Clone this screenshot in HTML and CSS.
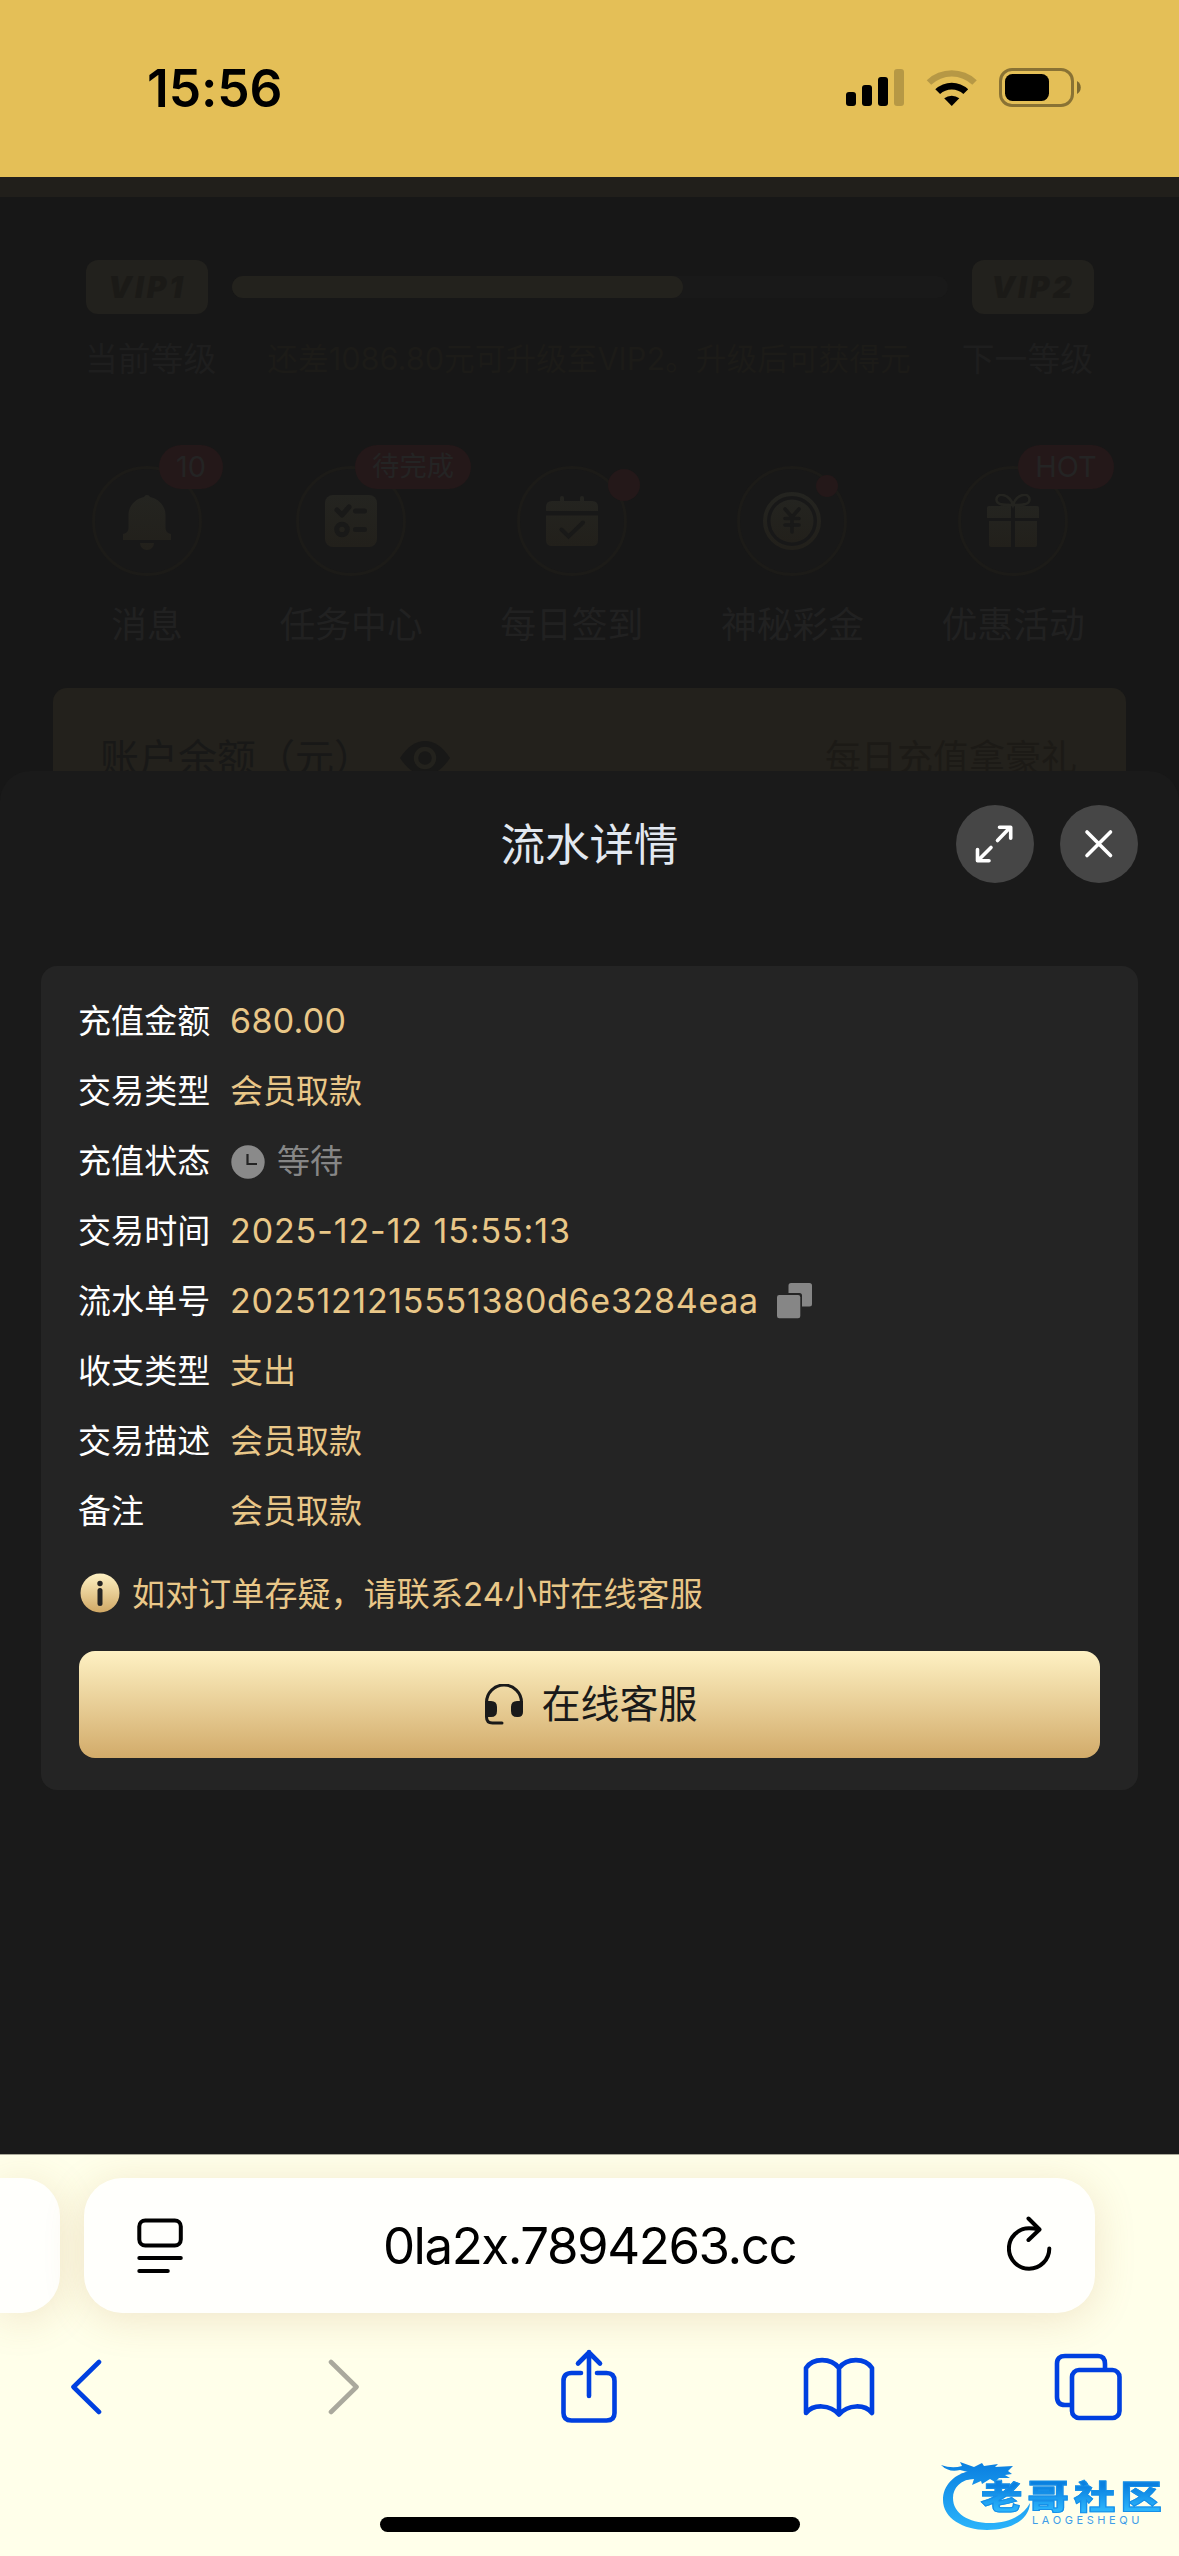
FILE: index.html
```html
<!DOCTYPE html>
<html lang="zh-CN">
<head>
<meta charset="utf-8">
<meta name="viewport" content="width=device-width">
<title>流水详情</title>
<link rel="stylesheet" href="styles.css">
</head>
<body>
<svg class="defs" width="0" height="0" aria-hidden="true">
  <defs>
    <linearGradient id="dim" x1="0" y1="0" x2="0" y2="1"><stop offset="0" stop-color="#242420"/><stop offset="1" stop-color="#22201b"/></linearGradient>
    <linearGradient id="gold" x1="0" y1="0" x2="0" y2="1"><stop offset="0" stop-color="#fef1c3"/><stop offset="1" stop-color="#d0a865"/></linearGradient>
    <linearGradient id="azure" gradientUnits="userSpaceOnUse" x1="0" y1="0" x2="0" y2="68"><stop offset="0" stop-color="#0a7fe0"/><stop offset="1" stop-color="#2bb4fb"/></linearGradient>
  </defs>
</svg>

<header class="status">
  <span class="clock">15:56</span>
  <div class="indicators">
    <svg width="58" height="38" viewBox="0 0 58 38"><rect x="0" y="23" width="10" height="14" rx="3"/><rect x="16" y="16" width="10" height="21" rx="3"/><rect x="32" y="8" width="10" height="29" rx="3"/><rect x="48" y="0" width="10" height="37" rx="3" opacity=".2"/></svg>
    <svg class="wifi" width="52" height="38" viewBox="0 0 52 38"><path opacity=".2" d="M.7 11.200A36.500 36.500 0 0 1 50.800 11.200L46.300 15.700A30 30 0 0 0 5.200 15.700Z"/><path d="M9.300 20.300A24 24 0 0 1 42.200 20.300L37.400 25.100A17 17 0 0 0 14.100 25.100Z"/><path d="M18.200 29.300A12 12 0 0 1 33.300 29.300L25.750 37Z"/></svg>
    <svg width="84" height="39" viewBox="0 0 84 39"><rect x="1.500" y="1.500" width="72" height="36" rx="11.500" fill="none" stroke="#000" stroke-width="3" opacity=".4"/><rect x="6" y="6" width="44" height="27" rx="7.500"/><path opacity=".45" d="M78 13a7.500 7.500 0 0 1 0 13Z"/></svg>
  </div>
</header>

<main class="viewport">
  <div class="strip"></div>
  <section class="account">
    <div class="vip-row">
      <span class="vip">VIP1</span>
      <div class="track"><div class="fill"></div></div>
      <span class="vip">VIP2</span>
    </div>
    <div class="vip-labels"><span>当前等级</span><span class="need">还差1086.80元可升级至VIP2。升级后可获得元</span><span>下一等级</span></div>
    <nav class="shortcuts">
      <div class="shortcut">
        <div class="disc"><svg width="50" height="58" viewBox="0 0 50 58" fill="url(#dim)"><path d="M22 5a3.200 3.200 0 0 1 6 0C37 7 43.500 14 43.500 23v13q0 5 5.500 6v6H1v-6q5.500-1 5.500-6V23C6.500 14 13 7 22 5ZM18 51h14a7 7 0 0 1-14 0Z"/></svg><b class="badge">10</b></div>
        <span>消息</span>
      </div>
      <div class="shortcut">
        <div class="disc"><svg width="52" height="52" viewBox="0 0 52 52"><rect width="52" height="52" rx="8" fill="url(#dim)"/><g fill="none" stroke="#191918" stroke-width="5" stroke-linecap="round" stroke-linejoin="round"><path d="M12 15l5 5 7-8M30.500 16h9M30.500 34.500h9"/><circle cx="17" cy="34.500" r="5.300"/></g></svg><b class="badge wide">待完成</b></div>
        <span>任务中心</span>
      </div>
      <div class="shortcut">
        <div class="disc"><svg width="54" height="52" viewBox="0 0 54 52"><path fill="url(#dim)" d="M1 16v-4q0-6 6-6h8V3q0-2 2-2t2 2v3h16V3q0-2 2-2t2 2v3h8q6 0 6 6v4ZM1 20.500h52V45q0 6-6 6H7q-6 0-6-6Z"/><path d="M16.500 34.500l7 7L38 27.500" fill="none" stroke="#191918" stroke-width="4" stroke-linecap="round"/></svg><b class="dot large"></b></div>
        <span>每日签到</span>
      </div>
      <div class="shortcut">
        <div class="disc"><svg width="58" height="58" viewBox="0 0 58 58"><circle cx="29" cy="29" r="27" fill="none" stroke="url(#dim)" stroke-width="4"/><circle cx="29" cy="29" r="21.500" fill="url(#dim)"/><path d="M22 17l7 8 7-8M29 25v15M22 26.500h14M22 33h14" fill="none" stroke="#191918" stroke-width="3.600" stroke-linecap="round"/></svg><b class="dot"></b></div>
        <span>神秘彩金</span>
      </div>
      <div class="shortcut">
        <div class="disc"><svg width="52" height="54" viewBox="0 0 52 54"><path fill="url(#dim)" d="M0 14q0-2 2-2h22v12H0ZM28 12h22q2 0 2 2v10H28ZM2 27h22v26H4q-2 0-2-2ZM28 27h22v24q0 2-2 2H28Z"/><path d="M26 11C22-1 9-2 9.500 6c.3 5 8 5 16.500 5 8.500 0 16.200 0 16.500-5C43-2 30-1 26 11Z" fill="none" stroke="#242420" stroke-width="2.600"/></svg><b class="badge wide hot">HOT</b></div>
        <span>优惠活动</span>
      </div>
    </nav>
    <div class="balance">
      <div class="balance-title">账户余额（元）<svg width="50" height="34" viewBox="0 0 50 34"><path fill="#181817" d="M0 17C8 5 16 0 25 0s17 5 25 17C42 29 34 34 25 34S8 29 0 17Z"/><circle cx="25" cy="17" r="9" fill="none" stroke="#23221d" stroke-width="4.500"/></svg></div>
      <span class="gift-text">每日充值拿豪礼</span>
    </div>
  </section>

  <section class="sheet">
    <div class="sheet-head">
      <h1>流水详情</h1>
      <div class="sheet-actions">
        <button class="round" aria-label="展开"><svg width="78" height="78" viewBox="0 0 78 78"><path d="M41.500 35.500L54 22.500M43.500 22.300h11.200v11M35 42.500L22 55.500M21.500 44.500v11.200h11.500"/></svg></button>
        <button class="round" aria-label="关闭"><svg width="78" height="78" viewBox="0 0 78 78"><path d="M27 27l23.500 23.500M50.500 27L27 50.500"/></svg></button>
      </div>
    </div>
    <div class="card">
      <dl class="rows">
        <div><dt>充值金额</dt><dd class="amount">680.00</dd></div>
        <div><dt>交易类型</dt><dd>会员取款</dd></div>
        <div><dt>充值状态</dt><dd class="pending"><svg width="34" height="34" viewBox="0 0 34 34"><circle cx="17" cy="17" r="16.700" fill="#8a8a8a"/><path d="M16.500 9v10H26" fill="none" stroke="#242424" stroke-width="2.200"/></svg>等待</dd></div>
        <div><dt>交易时间</dt><dd class="time">2025-12-12 15:55:13</dd></div>
        <div><dt>流水单号</dt><dd class="serial">2025121215551380d6e3284eaa<svg width="35" height="36" viewBox="0 0 35 36" fill="#868686"><path d="M14 0h18.500Q35 0 35 2.500V21q0 2.500-2.500 2.500H25V12.500q0-2.500-2.500-2.500h-11V2.500Q11.500 0 14 0Z"/><rect x="0" y="12" width="23.300" height="23.300" rx="2.200"/></svg></dd></div>
        <div><dt>收支类型</dt><dd>支出</dd></div>
        <div><dt>交易描述</dt><dd>会员取款</dd></div>
        <div><dt>备注</dt><dd>会员取款</dd></div>
      </dl>
      <p class="hint"><svg width="40" height="40" viewBox="0 0 40 40"><circle cx="20" cy="20" r="19.500" fill="url(#gold)"/><circle cx="20" cy="10.500" r="2.700" fill="#242424"/><path d="M20 17.500v13" stroke="#242424" stroke-width="5" stroke-linecap="round"/></svg><span>如对订单存疑，请联系24小时在线客服</span></p>
      <button class="service"><svg width="38" height="41" viewBox="0 0 38 41"><path d="M1.500 32V18.500a17.500 17.500 0 0 1 35 0V22M1.500 30v3q0 6 6 6H17" fill="none" stroke="#1a1a1a" stroke-width="3" stroke-linecap="round"/><path fill="#1a1a1a" d="M0 17h6q6 0 6 6v4q0 6-6 6H0ZM38 17h-6q-6 0-6 6v4q0 6 6 6h1q5 0 5-5Z"/></svg><span>在线客服</span></button>
    </div>
  </section>
</main>

<footer class="browser">
  <div class="tabs">
    <div class="tab-prev"></div>
    <div class="address">
      <svg width="46" height="56" viewBox="0 0 46 56" fill="none" stroke="#000" stroke-width="4" stroke-linecap="round"><rect x="2.300" y="2.500" width="41.500" height="25" rx="6"/><path d="M2.300 40h41.500M2.300 53h28.500"/></svg>
      <span class="url">0la2x.7894263.cc</span>
      <svg class="reload" width="45" height="55" viewBox="0 0 45 55" fill="none" stroke="#000" stroke-width="4" stroke-linecap="round" stroke-linejoin="round"><path d="M42.300 32.500A20.200 20.200 0 1 1 22 12.300q5 0 10 1.200"/><path d="M21.500 2.500L32.500 13.500 21.500 24"/></svg>
    </div>
  </div>
  <nav class="toolbar">
    <svg width="32" height="56" viewBox="0 0 32 56"><path d="M29 3L3.500 28 29 53"/></svg>
    <svg class="off" width="32" height="56" viewBox="0 0 32 56"><path d="M3 3l25.500 25L3 53"/></svg>
    <svg class="share" width="58" height="74" viewBox="0 0 58 74"><path d="M21 24h-9.500q-8 0-8 8v32q0 7.500 8 7.500h35q8 0 8-7.500V32q0-8-8-8H37M29 3v44M18 14.500L29 3.500l11 11"/></svg>
    <svg class="book" width="72" height="60" viewBox="0 0 72 60"><path d="M36 11C28 .5 10 .5 3 11v45c7-9 24-9 33 1.500 9-10.500 26-10.500 33-1.500V11C62 .5 44 .5 36 11ZM36 11v46"/></svg>
    <svg class="pages" width="68" height="68" viewBox="0 0 68 68"><rect x="18" y="17" width="47.500" height="48" rx="7"/><path d="M16 52h-5q-8 0-8-8V10.500Q3 3 11 3h33q7 0 7 8v4"/></svg>
  </nav>
  <div class="home"></div>
  <div class="watermark">
    <svg width="100" height="72" viewBox="0 0 100 72" fill="url(#azure)"><path d="M34 8C12 11 2 24 2 38c0 18 20 30 44 30 22 0 42-9 43-27-7 13-22 20-40 20-22 0-37-10-37-25 0-10 7-18 22-20Z"/><path d="M0 3q11 4 21 1L19 0l14 5 8-4 2 3 14-2-3 3 18-1-5 5 4 3-7 1 5 3-11 0-4 4-5-3-8 5-1-3-9 4 2-6-9 1 3-4-8-2 8-2-8-2Q8 11 0 3Z"/></svg>
    <span class="mark-name">老哥社区</span>
    <span class="mark-latin">LAOGESHEQU</span>
  </div>
</footer>
</body>
</html>
```
FILE: styles.css
```css
* { box-sizing: border-box; margin: 0; padding: 0; }
body { width: 1179px; height: 2556px; overflow: hidden; background: #171717; font-family: Inter, "Noto Sans CJK SC", sans-serif; display: flex; flex-direction: column; }
svg { display: block; flex: none; }
.defs { position: absolute; }
button { border: 0; font: inherit; }
.status { height: 177px; background: #e4bf57; display: flex; justify-content: space-between; align-items: flex-start; padding: 68px 96px 0 147px; }
.clock { font-size: 51.500px; font-weight: 600; line-height: 40px; letter-spacing: -0.100px; }
.indicators { display: flex; align-items: center; gap: 22px; }
.indicators svg:last-child { margin-left: -1px; }
.strip { height: 20px; background: #211f1b; }
.account { height: 574px; overflow: hidden; padding: 63px 53px 0; }
.vip-row { display: flex; align-items: center; gap: 24px; padding: 0 32px 0 33px; }
.vip { width: 122px; height: 54px; border-radius: 12px; background: #22211d; color: #1b1a17; font-size: 30px; font-weight: 900; font-style: italic; line-height: 54px; text-align: center; letter-spacing: 3px; }
.track { flex: 1; height: 22px; border-radius: 11px; background: #191919; }
.fill { width: 63%; height: 22px; border-radius: 11px; background: #23221d; }
.vip-labels { display: flex; justify-content: space-between; margin-top: 25px; padding: 0 33px 0 32px; font-size: 32.800px; line-height: 40px; color: #1e1e1e; white-space: nowrap; }
.need { font-size: 30.700px; color: #1c1b18; }
.shortcuts { display: flex; gap: 77.500px; margin-top: 87px; padding-left: 39px; }
.shortcut { display: flex; flex-direction: column; align-items: center; gap: 27px; min-width: 110px; font-size: 35.800px; line-height: 44px; color: #212121; white-space: nowrap; }
.disc { position: relative; width: 110px; height: 110px; border-radius: 50%; border: 3px solid #1c1b18; background: #181818; display: flex; align-items: center; justify-content: center; }
.badge { position: absolute; left: 64px; top: -24px; height: 44px; padding: 0 17px; border-radius: 22px; background: #241819; color: #242424; font-size: 29px; font-weight: 400; line-height: 43px; }
.badge.wide { left: 56px; font-size: 27.300px; }
.badge.hot { left: 57px; font-size: 29px; }
.dot { position: absolute; left: 76px; top: 6px; width: 22px; height: 22px; border-radius: 50%; background: #241819; }
.dot.large { left: 88px; top: 0; width: 32px; height: 32px; }
.balance { display: flex; justify-content: space-between; height: 120px; margin-top: 41px; padding: 45px 49px 0 47px; border-radius: 14px; background: #23211c; line-height: 50px; }
.balance-title { display: flex; align-items: center; gap: 27px; height: 50px; font-size: 39px; color: #181817; }
.gift-text { font-size: 36px; color: #1c1a16; }
.sheet { height: 1383px; background: #1a1a1a; border-radius: 30px 30px 0 0; padding: 33px 41px 0; }
.sheet-head { display: grid; grid-template-columns: 1fr auto 1fr; align-items: center; height: 79px; }
h1 { grid-column: 2; padding-top: 2px; font-size: 44.500px; font-weight: 400; line-height: 60px; color: #e2e8f0; }
.sheet-actions { display: flex; justify-content: flex-end; gap: 26px; }
.round { width: 78px; height: 78px; border-radius: 50%; background: #464646; }
.round svg { fill: none; stroke: #fff; stroke-width: 3.600; stroke-linecap: round; stroke-linejoin: round; }
.card { height: 824px; margin-top: 83px; padding: 20px 38px 0 37px; border-radius: 16px; background: #242424; }
.rows > div { display: flex; height: 70px; align-items: center; font-size: 33px; line-height: 44px; color: #fff; }
dt { width: 152px; letter-spacing: 0.100px; }
dd { display: flex; align-items: center; color: #e9c788; white-space: nowrap; }
.amount, .time, .serial { font-size: 34px; }
.amount { letter-spacing: 0.300px; }
.time { letter-spacing: 0.900px; }
.serial { letter-spacing: 0.700px; }
.pending { gap: 12px; color: #868686; }
.pending svg { margin: 2px 0 0 1px; }
.serial svg { margin-left: 18px; }
.hint { display: flex; align-items: center; gap: 12px; height: 44px; margin: 25px 0 0 2px; font-size: 33px; letter-spacing: 0.100px; color: #e9c788; white-space: nowrap; }
.hint span { margin-top: -2px; }
.service { display: flex; align-items: center; justify-content: center; gap: 18px; width: calc(100% - 1px); height: 107px; margin: 36px 0 0 1px; padding-left: 4px; border-radius: 16px; background: linear-gradient(#fef1c3, #d2ab6a); color: #1a1a1a; font-size: 39px; }
.service span { margin-top: -7px; }
.browser { position: relative; height: 402px; overflow: hidden; border-top: 1px solid #aaa999; background: #ffffea; }
.tabs { display: flex; gap: 24px; padding-top: 23px; }
.tab-prev { width: 60px; height: 135px; border-radius: 0 38px 38px 0; background: #fffffc; box-shadow: 0 6px 40px rgba(170, 110, 50, .18); }
.address { display: flex; align-items: center; justify-content: space-between; width: 1011px; height: 135px; padding: 0 43px 0 53px; border-radius: 38px; background: #fffffc; box-shadow: 0 6px 40px rgba(170, 110, 50, .18); }
.url { margin-right: 11px; font-size: 51px; line-height: 60px; letter-spacing: -1.450px; color: #000; }
.reload { margin-bottom: 5px; }
.toolbar { display: flex; align-items: center; height: 76px; margin-top: 36px; padding-left: 70px; }
.toolbar svg { fill: none; stroke: #0040e0; stroke-width: 4.600; stroke-linecap: round; stroke-linejoin: round; }
.toolbar .off { margin-left: 226px; stroke: #aaa99d; }
.toolbar .share { margin: 0 0 3px 200px; }
.toolbar .book { margin-left: 185px; }
.toolbar .pages { margin-left: 179px; }
.home { width: 420px; height: 15px; margin: 92px auto 0; border-radius: 8px; background: #000; }
.watermark { position: absolute; left: 941px; top: 307px; width: 225px; height: 84px; }
.mark-name { position: absolute; left: 40px; top: 19px; font-size: 33px; font-weight: 900; line-height: 32px; white-space: nowrap; letter-spacing: 4.200px; transform: scaleX(1.25); transform-origin: left; background: linear-gradient(#0a80e0 15%, #2bb4fb 90%); -webkit-background-clip: text; background-clip: text; color: transparent; -webkit-text-stroke: 1px #168fe8; }
.mark-latin { position: absolute; left: 91px; top: 52px; font-size: 11px; line-height: 12px; letter-spacing: 3.600px; color: #3d9de8; white-space: nowrap; }
```
